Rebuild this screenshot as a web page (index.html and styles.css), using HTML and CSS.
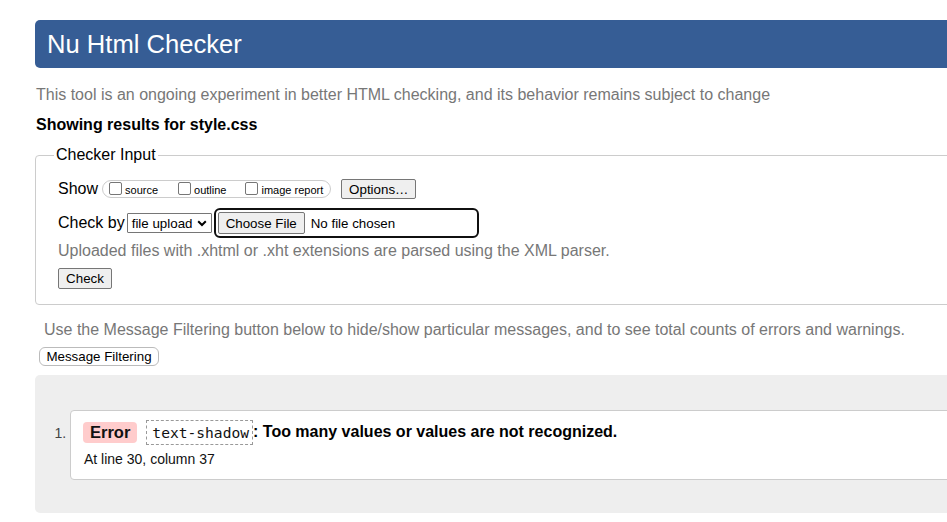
FILE: index.html
```html
<!DOCTYPE html>
<html lang="en">
<head>
<meta charset="utf-8">
<title>Nu Html Checker</title>
<link rel="stylesheet" href="styles.css">
</head>
<body>
<div class="page">
  <h1 class="title">Nu Html Checker</h1>
  <p class="intro">This tool is an ongoing experiment in better HTML checking, and its behavior remains subject to change</p>
  <p class="showing">Showing results for style.css</p>

  <fieldset class="checker">
    <legend class="legend">Checker Input</legend>
    <div class="row row-show">
      <span class="label">Show</span>
      <span class="opts">
        <span class="opt opt-source"><span class="cb"></span>source</span>
        <span class="opt opt-outline"><span class="cb"></span>outline</span>
        <span class="opt opt-image"><span class="cb"></span>image report</span>
      </span>
      <span class="btn btn-options">Options…</span>
    </div>
    <div class="row row-check">
      <span class="label">Check by</span>
      <span class="select">file upload
        <svg class="chev" width="10" height="7" viewBox="0 0 10 7"><path d="M1.2 1.3 L5 5 L8.8 1.3" fill="none" stroke="#000" stroke-width="2"/></svg>
      </span>
      <span class="file">
        <span class="btn btn-choose">Choose File</span>
        <span class="nofile">No file chosen</span>
      </span>
    </div>
    <p class="note">Uploaded files with .xhtml or .xht extensions are parsed using the XML parser.</p>
    <span class="btn btn-check">Check</span>
  </fieldset>

  <p class="filter-note">Use the Message Filtering button below to hide/show particular messages, and to see total counts of errors and warnings.</p>
  <span class="btn btn-filter">Message Filtering</span>

  <div class="results">
    <ol class="messages">
      <li class="msg">
        <p class="msg-line"><span class="badge">Error</span><code class="code">text-shadow</code><span class="msg-text">: Too many values or values are not recognized.</span></p>
        <p class="loc">At line 30, column 37</p>
      </li>
    </ol>
  </div>
</div>
</body>
</html>
```

FILE: styles.css
```css
html, body {
  margin: 0;
  padding: 0;
  background: #fff;
  overflow: hidden;
}
body {
  font-family: "Liberation Sans", Arial, sans-serif;
  font-size: 16px;
  color: #000;
}
.page {
  width: 960px;
  padding: 20px 0 0 35px;
}
.title {
  margin: 0;
  height: 48px;
  background: #365d95;
  border-radius: 5px;
  color: #fff;
  font-weight: normal;
  font-size: 25.6px;
  line-height: 48px;
  padding-left: 12px;
}
.intro {
  margin: 17px 0 0 1px;
  color: #777;
  line-height: 19px;
}
.showing {
  margin: 11px 0 0 1px;
  font-weight: bold;
  line-height: 19px;
}
.checker {
  margin: 11px 0 0 0;
  border: 1px solid #ccc;
  border-radius: 4px;
  padding: 0 22px 15px 22px;
  min-height: 0;
}
.legend {
  padding: 0 2px;
  margin-left: -4px;
  line-height: 20px;
}
.row {
  display: flex;
  align-items: center;
}
.row-show {
  margin-top: 14px;
  height: 20px;
}
.label {
  line-height: 18px;
}
.opts {
  display: flex;
  align-items: flex-end;
  height: 18px;
  box-sizing: border-box;
  margin-left: 4px;
  border: 1px solid #ccc;
  border-radius: 9px;
  padding: 0 7px 0 6px;
  font-size: 11px;
}
.opt {
  display: flex;
  align-items: flex-end;
  line-height: 14px;
}
.opt-outline { margin-left: 20px; }
.opt-image { margin-left: 19px; }
.cb {
  width: 13px;
  height: 13px;
  box-sizing: border-box;
  border: 1px solid #767676;
  border-radius: 2px;
  margin: 0 3px 2px 0;
}
.btn {
  display: inline-flex;
  align-items: center;
  justify-content: center;
  box-sizing: border-box;
  background: #efefef;
  border: 1px solid #767676;
  border-radius: 2px;
  font-size: 13.33px;
  color: #000;
  height: 20px;
  padding: 0 6px;
}
.btn-options {
  margin-left: 10px;
  width: 75px;
}
.row-check {
  margin-top: 9px;
  height: 30px;
}
.select {
  display: inline-flex;
  align-items: center;
  box-sizing: border-box;
  height: 20px;
  width: 85px;
  margin-left: 2px;
  border: 1px solid #767676;
  border-radius: 1px;
  font-size: 13.33px;
  padding: 0 0 0 4px;
}
.chev {
  margin-left: 5px;
}
.file {
  display: inline-flex;
  align-items: center;
  box-sizing: border-box;
  height: 30px;
  width: 265px;
  margin-left: 2px;
  border: 2px solid #101010;
  border-radius: 6px;
  padding-left: 2px;
  font-size: 13.33px;
}
.btn-choose {
  width: 87px;
  height: 22px;
}
.nofile {
  margin-left: 6px;
}
.note {
  margin: 3px 0 0 0;
  color: #777;
  line-height: 19px;
}
.btn-check {
  margin-top: 8px;
  width: 54px;
  height: 21px;
}
.filter-note {
  margin: 15px 0 0 9px;
  color: #777;
  line-height: 19px;
}
.btn-filter {
  margin: 8px 0 0 4px;
  width: 120px;
  height: 19px;
  border: 1px solid #bbb;
  background: #fff;
  border-radius: 6px;
}
.results {
  margin-top: 9px;
  background: #eee;
  border-radius: 5px;
  height: 138px;
  box-sizing: border-box;
  padding-top: 35px;
}
.messages {
  margin: 0;
  padding: 0 0 0 35px;
}
.msg {
  background: #fff;
  border: 1px solid #ccc;
  border-radius: 4px;
  height: 70px;
  box-sizing: border-box;
  padding: 8px 0 0 12px;
  font-size: 14px;
  color: #333;
}
.msg::marker {
  color: #444;
  font-size: 14px;
}
.msg-line {
  margin: 0;
  display: flex;
  align-items: center;
  height: 26px;
  font-size: 16px;
  color: #000;
}
.badge {
  display: inline-block;
  background: #fcc;
  border-radius: 4px;
  font-weight: bold;
  line-height: 21px;
  padding: 0 7px;
  font-size: 16.5px;
  color: #111;
}
.code {
  display: inline-block;
  margin-left: 9px;
  border: 1px dashed #999;
  font-family: "DejaVu Sans Mono", monospace;
  font-size: 14.6px;
  line-height: 23px;
  padding: 0 3px 0 5px;
  color: #111;
}
.msg-text {
  font-weight: bold;
}
.loc {
  margin: 6px 0 0 1px;
  font-size: 14px;
  color: #111;
  line-height: 16px;
}
```
